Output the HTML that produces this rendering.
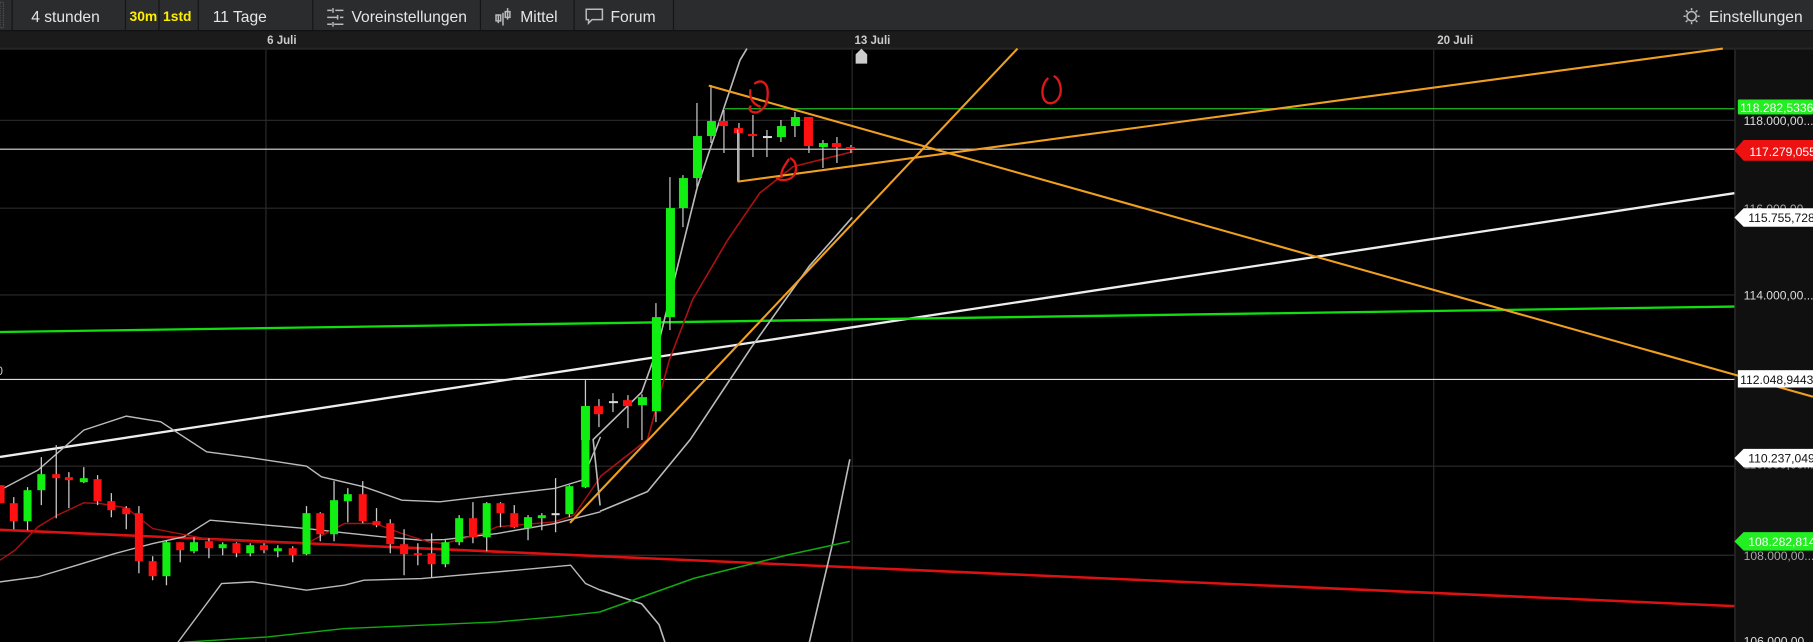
<!DOCTYPE html>
<html><head><meta charset="utf-8"><style>
html,body{margin:0;padding:0;background:#000;width:1813px;height:642px;overflow:hidden}
svg{display:block}
text{font-family:"Liberation Sans",sans-serif}
</style></head><body>
<svg width="1813" height="642" viewBox="0 0 1568 555" preserveAspectRatio="none" xmlns="http://www.w3.org/2000/svg">
<rect x="0" y="0" width="1568" height="555" fill="#000"/>
<!-- toolbar -->
<rect x="0" y="0" width="1568" height="27" fill="#2a2c2e"/>
<rect x="0" y="26" width="1568" height="1" fill="#111"/>
<rect x="0" y="27" width="1568" height="14" fill="#1b1b1b"/>
<rect x="0" y="41" width="1568" height="2" fill="#262626"/>
<g fill="#151515">
<rect x="10" y="0" width="1" height="27"/><rect x="108" y="0" width="1" height="27"/><rect x="137" y="0" width="1" height="27"/>
<rect x="171" y="0" width="1" height="27"/><rect x="270" y="0" width="1" height="27"/><rect x="415" y="0" width="1" height="27"/>
<rect x="496" y="0" width="1" height="27"/><rect x="582" y="0" width="1" height="27"/>
</g>
<rect x="0" y="2" width="3" height="22" fill="none" stroke="#555" stroke-dasharray="1,1"/>
<g font-size="13.5" fill="#e6e6e6">
<text x="27" y="19">4 stunden</text>
<text x="184" y="19">11 Tage</text>
<text x="304" y="19">Voreinstellungen</text>
<text x="450" y="19">Mittel</text>
<text x="528" y="19">Forum</text>
<text x="1478" y="19">Einstellungen</text>
</g>
<g font-size="12" font-weight="bold" fill="#ffee00"><text x="112" y="18">30m</text><text x="141" y="18">1std</text></g>
<!-- icons -->
<g stroke="#bbb" stroke-width="1.3" fill="none">
<path d="M283 9h4M290 9h7M283 15h9M294 15h3M283 21h4M289 21h8M288 7v4M292 13v4M288 19v4"/>
<path d="M431 20v-7M435 22v-11M439 17v-10M429 13h4v5h-4zM437 10h4v5h-4z"/>
<path d="M507 8h14v9h-9l-3 3v-3h-2z"/>
<circle cx="1463" cy="14" r="4"/><path d="M1463 7v2M1463 19v2M1456 14h2M1468 14h2M1458 9l1.5 1.5M1468 9l-1.5 1.5M1458 19l1.5-1.5M1468 19l-1.5-1.5"/>
</g>
<g font-size="10" font-weight="bold" fill="#ccc"><text x="231" y="38">6 Juli</text><text x="739" y="38">13 Juli</text><text x="1243" y="38">20 Juli</text></g>
<path d="M740 55v-8l5-5 5 5v8z" fill="#ccc"/>
<!-- grid -->
<g stroke="#2b2b2b" stroke-width="1">
<path d="M0 104H1500M0 180H1500M0 255H1500M0 403H1500M0 480H1500M230 43V555M737 43V555M1240 43V555"/>
</g>
<!-- axis -->
<rect x="1500" y="43" width="68" height="512" fill="#101010"/>
<rect x="1500" y="43" width="1" height="512" fill="#333"/>
<path d="M627 94H1500" stroke="#22bb22" stroke-width="1"/>
<path d="M0 129H1500M0 328H1500" stroke="#ddd" stroke-width="1"/>
<path d="M0 395L1500 167" stroke="#eee" stroke-width="2"/>
<path d="M0 287L1500 265" stroke="#11dd11" stroke-width="2"/>
<path d="M0 458L1500 524" stroke="#dd1111" stroke-width="2.2"/>
<g transform="matrix(0.993,0,0,0.2883,0,328.6)" fill="none">
<polyline vector-effect="non-scaling-stroke" stroke-width="1.4" stroke="#bbb" points="0,330 33,270 73,150 110,108 140,125 180,215 217,232 267,258 280,290 317,320 350,360 383,365 420,350 483,325 507,300 523,170"/>
<polyline vector-effect="non-scaling-stroke" stroke-width="1.4" stroke="#bbb" points="0,605 33,590 67,555 100,520 133,490 160,470 183,420 217,430 233,435 267,445 300,458 333,470 367,480 387,478 433,460 483,430 523,395"/>
<polyline vector-effect="non-scaling-stroke" stroke-width="1.4" stroke="#bbb" points="155,786 193,610 220,605 267,630 300,615 317,600 367,595 400,585 450,570 497,555 510,610 523,630"/>
<polyline vector-effect="non-scaling-stroke" stroke-width="1.4" stroke="#aa1111" points="0,540 13,510 33,440 50,405 73,368 87,370 110,383 133,445 183,478 233,488 267,490 300,430 327,430 350,460 373,485 387,490 420,460 433,440 483,425 500,405 523,290"/>
<polyline vector-effect="non-scaling-stroke" stroke-width="1.4" stroke="#11aa11" points="160,786 233,770 300,745 367,735 433,725 483,710 523,695"/>
</g>
<g fill="none" stroke-width="1.4">
<polyline stroke="#bbb" points="519,437 513,380 555,339 568,303 603,162 640,52 646,42"/>
<polyline stroke="#bbb" points="519,442 560,425 597,380 650,300 700,230 737,188"/>
<polyline stroke="#bbb" points="519,510 555,522 570,540 575,555"/>
<polyline stroke="#bbb" points="700,555 720,470 735,397"/>
<polyline stroke="#aa1111" points="519,412 560,380 579,311 599,259 629,208 657,167 686,144 738,131"/>
<polyline stroke="#11aa11" points="519,529 600,500 680,480 735,468"/>
</g>
<!-- candles in original coords -->
<g transform="scale(0.8648)">
<g transform="scale(1.148,1)">
<g stroke="#ccc" stroke-width="1.1">
<path d="M12 497V529M24 487V530M36 457V505M49 445V518M60 472V508M73 467V483M85 475V505M97 493V517M110 506V529M121 506V573M133 556V580M145 540V585M157 542V562M169 537V553M182 538V558M194 542V555M206 542V557M218 543V556M230 543V553M242 545V557M255 546V562M267 506V555M279 512V541M291 481V541M303 488V522M316 481V523M328 508V527M340 519V553M352 529V575M364 543V565M376 533V577M388 540V567M400 515V545M412 502V543M424 502V551M436 502V527M448 505V528M460 515V540M472 513V530M484 478V532M496 485V517M510 380V488"/>
</g>
<g fill="#ff1111">
<rect x="0" y="485" width="4" height="18"/>
<rect x="8.5" y="503" width="7" height="18"/><rect x="45.5" y="474" width="7" height="4"/><rect x="56.5" y="477" width="7" height="3"/>
<rect x="81.5" y="479" width="7" height="22"/><rect x="93.5" y="501" width="7" height="9"/><rect x="106.5" y="508" width="7" height="6"/>
<rect x="117.5" y="513" width="7" height="48"/><rect x="129.5" y="561" width="7" height="15"/><rect x="153.5" y="542" width="7" height="8"/>
<rect x="178.5" y="541" width="7" height="7"/><rect x="202.5" y="543" width="7" height="10"/><rect x="226.5" y="545" width="7" height="5"/>
<rect x="251.5" y="548" width="7" height="7"/><rect x="275.5" y="513" width="7" height="21"/><rect x="312.5" y="494" width="7" height="27"/>
<rect x="324.5" y="521" width="7" height="4"/><rect x="336.5" y="523" width="7" height="21"/><rect x="348.5" y="544" width="7" height="10"/>
<rect x="360.5" y="553" width="7" height="2"/><rect x="372.5" y="553" width="7" height="11"/><rect x="408.5" y="518" width="7" height="19"/>
<rect x="432.5" y="503" width="7" height="10"/><rect x="444.5" y="513" width="7" height="14"/>
</g>
<g fill="#11ee11">
<rect x="20.5" y="490" width="7" height="31"/><rect x="32.5" y="474" width="7" height="16"/><rect x="69.5" y="478" width="7" height="4"/>
<rect x="141.5" y="542" width="7" height="34"/><rect x="165.5" y="542" width="7" height="9"/><rect x="190.5" y="544" width="7" height="4"/>
<rect x="214.5" y="545" width="7" height="8"/><rect x="238.5" y="548" width="7" height="3"/><rect x="263.5" y="513" width="7" height="41"/>
<rect x="287.5" y="500" width="7" height="34"/><rect x="299.5" y="494" width="7" height="7"/><rect x="384.5" y="542" width="7" height="22"/>
<rect x="396.5" y="518" width="7" height="24"/><rect x="420.5" y="503" width="7" height="34"/><rect x="456.5" y="517" width="7" height="11"/>
<rect x="468.5" y="515" width="7" height="3"/><rect x="492.5" y="486" width="7" height="28"/><rect x="506.5" y="406" width="7" height="81"/>
</g>
<rect x="480.5" y="513" width="7" height="2" fill="#ddd"/>
</g>
<g stroke="#ccc" stroke-width="1.2">
<path d="M599 399V427M613 393V412M628 395V428M642 394V440M656 303V422M670 177V330M683 175V227M697 103V187M711 85V143M724 110V153M739 123V182M753 115V157M767 130V157M781 120V142M795 112V137M809 117V153M823 140V168M837 137V163M851 145V153"/>
</g>
<g fill="#ff1111">
<rect x="594" y="406" width="9" height="8"/><rect x="623" y="400" width="9" height="6"/>
<rect x="719" y="121" width="9" height="5"/><rect x="734" y="128" width="9" height="5"/><rect x="748" y="134" width="9" height="2"/>
<rect x="804" y="117" width="9" height="29"/><rect x="832" y="143" width="9" height="4"/><rect x="846" y="147" width="9" height="2"/>
</g>
<g fill="#11ee11">
<rect x="581" y="406" width="9" height="34"/><rect x="638" y="397" width="9" height="8"/><rect x="652" y="317" width="9" height="94"/>
<rect x="666" y="208" width="9" height="109"/><rect x="679" y="178" width="9" height="30"/><rect x="693" y="136" width="9" height="42"/>
<rect x="707" y="121" width="9" height="15"/><rect x="777" y="126" width="9" height="11"/><rect x="791" y="117" width="9" height="9"/>
<rect x="819" y="143" width="9" height="4"/>
</g>
<g fill="#ddd"><rect x="609" y="401" width="9" height="2"/><rect x="763" y="136" width="9" height="2"/></g>
</g>
<g stroke="#f0a020" stroke-width="1.8" fill="none">
<path d="M613 74L1568 343"/>
<path d="M638 157L1490 42"/>
<path d="M493 452L880 42"/>
</g>
<path d="M638 112V157" stroke="#ccc" stroke-width="1"/>
<g stroke="#e01818" stroke-width="2" fill="none" stroke-linecap="round">
<path d="M653 72c6-4 11 0 11 8 0 9-2 14-9 17-5 1-8-2-6-5M649 78c-1 6 2 12 8 14"/>
<path d="M684 137c4 2 6 8 3 14-3 5-11 6-15 3M682 138c-4 6-7 10-6 15"/>
<path d="M906 68c-4 4-6 12-3 18 3 5 10 4 13-2 3-6 1-15-4-18"/>
</g>
<g font-size="10.5" fill="#ddd">
<text x="1508" y="108">118.000,00...</text>
<text x="1508" y="259">114.000,00...</text>
<text x="1508" y="405" fill="#aaa">110.000,00...</text>
<text x="1508" y="484" fill="#aaa">108.000,00...</text>
<text x="1508" y="184" fill="#aaa">116.000,00...</text>
<text x="1508" y="558">106.000,00...</text>
</g>
<rect x="1503" y="86" width="65" height="13" fill="#22ee22" rx="1"/>
<text x="1505" y="97" font-size="10.5" fill="#fff">118.282,5336</text>
<path d="M1500 130L1508 121H1568V139H1508Z" fill="#ee1111"/>
<text x="1513" y="135" font-size="10.5" fill="#fff">117.279,055</text>
<path d="M1500 188L1508 180H1568V196H1508Z" fill="#fff"/>
<text x="1512" y="192" font-size="10.5" fill="#111">115.755,728</text>
<rect x="1503" y="320" width="65" height="15" fill="#fff"/>
<text x="1505" y="332" font-size="10.5" fill="#111">112.048,9443</text>
<path d="M1500 396L1508 388H1568V404H1508Z" fill="#fff"/>
<text x="1512" y="400" font-size="10.5" fill="#111">110.237,049</text>
<path d="M1500 468L1508 460H1568V476H1508Z" fill="#22ee22"/>
<text x="1512" y="472" font-size="10.5" fill="#fff">108.282,814</text>
<text x="-3" y="324" font-size="10" fill="#ccc">0</text>
</svg>
</body></html>
